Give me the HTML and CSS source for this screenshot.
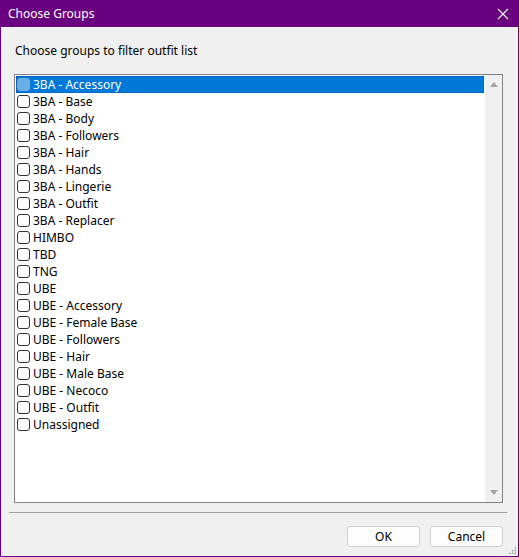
FILE: index.html
```html
<!DOCTYPE html>
<html lang="en">
<head>
    <meta charset="UTF-8">
    <title>Choose Groups</title>
    <link rel="stylesheet" href="styles.css">
</head>
<body>
    <div class="window">
        <div class="titlebar">
            <span class="title">Choose Groups</span>
            <svg class="close" width="12" height="12" viewBox="0 0 12 12">
                <path d="M1 1 L11 11 M11 1 L1 11" stroke="#fff" stroke-width="1.1" fill="none"/>
            </svg>
        </div>

        <div class="content">
            <div class="prompt">Choose groups to filter outfit list</div>

            <div class="listbox">
                <ul id="groupList" class="items"></ul>
                <div class="scrollbar">
                    <span class="arrow up"></span>
                    <span class="arrow down"></span>
                </div>
            </div>

            <div class="separator"></div>

            <div class="buttons">
                <button type="button" class="btn">OK</button>
                <button type="button" class="btn">Cancel</button>
            </div>
        </div>
        <div class="grip"></div>
    </div>

    <script>
        const groups = [
            '3BA - Accessory', '3BA - Base', '3BA - Body', '3BA - Followers',
            '3BA - Hair', '3BA - Hands', '3BA - Lingerie', '3BA - Outfit',
            '3BA - Replacer', 'HIMBO', 'TBD', 'TNG', 'UBE', 'UBE - Accessory',
            'UBE - Female Base', 'UBE - Followers', 'UBE - Hair',
            'UBE - Male Base', 'UBE - Necoco', 'UBE - Outfit', 'Unassigned'
        ];

        // first entry starts out selected, like the native list does
        document.getElementById('groupList').innerHTML = groups.map((g, i) =>
            `<li class="item${i === 0 ? ' selected' : ''}"><span class="check"></span>${g}</li>`
        ).join('');
    </script>
</body>
</html>
```

FILE: styles.css
```css
body {
    margin: 0;
    font-family: 'Noto Sans', 'Open Sans', sans-serif;
    font-size: 12px;
    color: #000;
    background: #fff;
}

.window {
    position: relative;
    width: 519px;
    height: 557px;
    box-sizing: border-box;
    background-color: #f0f0f0;
    border: 1px solid #680080;
    border-top: none;
    display: flex;
    flex-direction: column;
}

.titlebar {
    height: 27px;
    background-color: #680080;
    color: #fff;
    display: flex;
    align-items: center;
    justify-content: space-between;
    padding: 0 9px 0 7px;
    flex-shrink: 0;
}

.title {
    font-size: 12px;
}

.content {
    padding: 0 15px 0 13px;
    display: flex;
    flex-direction: column;
}

.prompt {
    margin-top: 15px;
    height: 17px;
    line-height: 17px;
    padding-left: 1px;
}

.listbox {
    margin-top: 15px;
    height: 429px;
    box-sizing: border-box;
    border: 1px solid #828282;
    background-color: #fff;
    display: flex;
}

.items {
    list-style: none;
    margin: 0 1px 0 0;
    padding: 1px 0 0 1px;
    flex: 1;
}

.item {
    height: 17px;
    line-height: 17px;
    display: flex;
    align-items: center;
    white-space: nowrap;
}

.item.selected {
    background-color: #0078d7;
    color: #fff;
    outline: 1px dotted #1c4f7c;
    outline-offset: -1px;
}

.check {
    width: 11px;
    height: 11px;
    border: 1px solid #333;
    border-radius: 3px;
    background: #fff;
    margin: 0 3px 0 1px;
    flex-shrink: 0;
}

.selected .check {
    background: #6aaee6;
    border-color: #6aaee6;
}

.scrollbar {
    width: 17px;
    background-color: #f0f0f0;
    display: flex;
    flex-direction: column;
    justify-content: space-between;
    align-items: center;
    padding: 7px 0;
}

.arrow {
    width: 0;
    height: 0;
    border-left: 4px solid transparent;
    border-right: 4px solid transparent;
}

.arrow.up {
    border-bottom: 5px solid #a3a3a3;
}

.arrow.down {
    border-top: 5px solid #a3a3a3;
}

.separator {
    margin: 9px -4px 0 -5px;
    height: 1px;
    background-color: #a0a0a0;
}

.buttons {
    display: flex;
    justify-content: flex-end;
    gap: 10px;
    margin-top: 13px;
}

.btn {
    width: 73px;
    height: 21px;
    font-family: inherit;
    font-size: 12px;
    background: #fdfdfd;
    border: 1px solid #d0d0d0;
    border-radius: 3px;
    padding: 0;
    color: #000;
}

/* resize grip dots in the corner */
.grip {
    position: absolute;
    right: 2px;
    bottom: 2px;
    width: 8px;
    height: 8px;
    background-image: radial-gradient(circle, #b8b8b8 1px, transparent 1.2px);
    background-size: 3px 3px;
    clip-path: polygon(100% 0, 100% 100%, 0 100%);
}
```
